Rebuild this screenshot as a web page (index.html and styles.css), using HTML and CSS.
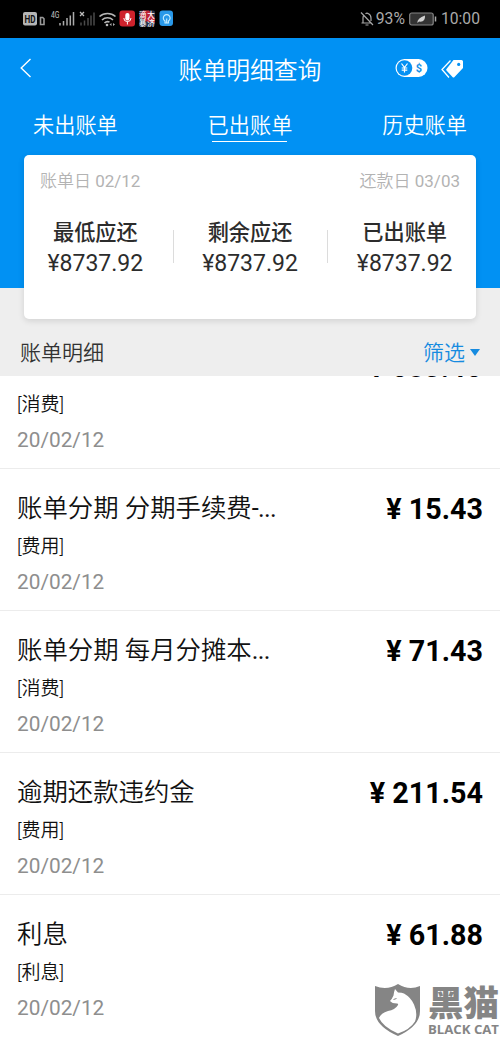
FILE: index.html
```html
<!DOCTYPE html>
<html lang="zh-CN">
<head>
<meta charset="utf-8">
<title>账单明细查询</title>
<link rel="stylesheet" href="styles.css">
</head>
<body>
<div class="status">
  <svg class="status-left" width="160" height="22" viewBox="0 0 160 22">
    <rect x="0" y="4" width="14" height="13.500" rx="2" fill="#b5b5b5"/>
    <text x="7" y="14.500" text-anchor="middle" textLength="11" lengthAdjust="spacingAndGlyphs" font-size="10" font-weight="700" fill="#111">HD</text>
    <path d="M17.500 9.500h2.200l1.300 1.300v5.700h-3.500z" fill="none" stroke="#999" stroke-width="1.600"/>
    <text x="28" y="9.500" font-size="8.500" textLength="8.500" lengthAdjust="spacingAndGlyphs" fill="#c0c0c0">4G</text>
    <path d="M37 17.500v-2.500M40.500 17.500v-4.500M44 17.500v-7.500M47.300 17.500v-10M50.500 17.500v-13.500" stroke="#aaa" stroke-width="1.500"/>
    <path d="M57 4l4 4m0-4l-4 4" stroke="#bbb" stroke-width="1.300"/>
    <path d="M58 17.500v-3M61.500 17.500v-5M65 17.500v-7.500M68 17.500v-10M71 17.500v-13" stroke="#4a4a4a" stroke-width="1.500"/>
    <path d="M76.500 8.500a12 12 0 0 1 16 0M79 12a8 8 0 0 1 11 0M81.500 15a4.500 4.500 0 0 1 5-1" fill="none" stroke="#b5b5b5" stroke-width="1.600"/>
    <circle cx="84" cy="17" r="1.300" fill="#bbb"/><path d="M86.500 16.500l2-1.500v3zM92 16.500l-2-1.500v3z" fill="#aaa"/>
    <rect x="96.500" y="2.500" width="15.500" height="16" rx="3" fill="#cf222c"/>
    <rect x="102.300" y="5" width="4.200" height="7.500" rx="2" fill="#fff"/>
    <path d="M100.800 10a3.600 3.600 0 0 0 7.200 0M104.400 13.500v3" fill="none" stroke="#fff"/>
    <rect x="116" y="2.500" width="16" height="16" rx="2" fill="#243048"/>
    <path d="M120 2.500h6l6 8v4l-9-1-7-6z" fill="#bd2337"/>
    <g fill="#fff" font-size="7.500" font-weight="500"><text x="116" y="9.500">滴</text><text x="124.300" y="9.500">大</text><text x="116" y="17.800">暴</text><text x="124.300" y="17.800">济</text></g>
    <rect x="136.500" y="2.500" width="13.500" height="15.500" rx="3" fill="#2998e8"/>
    <path d="M142 13a3.400 3.400 0 1 1 3.400 0v2H142zM143.700 15.500v-5" fill="none" stroke="#c9efff" stroke-width="1.100"/>
  </svg>
  <div class="status-right">
    <svg width="14" height="16" viewBox="0 0 14 16" fill="none" stroke="#a8a8a8" stroke-width="1.200"><path d="M1 1.500l12 12.500M1.500 12h9M3 12V7q0-2 1-3M5.500 2.700Q7 1.500 8.500 2.700 11 4 11 7v3M5.500 14h3"/></svg>
    <span class="pct">93%</span>
    <svg width="28" height="14" viewBox="0 0 28 14"><rect x=".7" y="1" width="23.500" height="12" rx="2" fill="#333" stroke="#858585" stroke-width="1.200"/><path d="M26.500 4.500v5" stroke="#aaa" stroke-width="1.500"/><path d="M8.500 11q-.5-5 7.500-7.500 .5 7-6 6z" fill="#d0d0d0"/></svg>
    <span class="time">10:00</span>
  </div>
</div>
<header class="hero">
  <div class="nav">
    <svg class="back" width="12" height="20" viewBox="0 0 12 20"><path d="M10.500 1L1.200 10l9.300 9" fill="none" stroke="#fff" stroke-width="1.400"/></svg>
    <h1 class="nav-title">账单明细查询</h1>
    <div class="nav-icons">
      <svg width="33" height="18" viewBox="0 0 33 18"><rect x=".5" y="0" width="32" height="18" rx="9" fill="#fff"/><circle cx="9.500" cy="9" r="7.800" fill="#0591f3"/><path d="M6.500 4.500l3 4 3-4M9.500 8.500v5M6.700 9h5.600M6.700 11.200h5.600" fill="none" stroke="#fff" stroke-width="1.200"/><text x="23.800" y="13" text-anchor="middle" font-size="11" font-weight="700" fill="#1590e8">$</text></svg>
      <svg width="23" height="20" viewBox="0 0 23 20"><path d="M12.500 1h8q1.500 0 1.500 1.500v6.500l-8.500 9q-1 1-2 0l-6-6.500q-.8-.8 0-1.600z" fill="#fff"/><circle cx="17.700" cy="5.400" r="1.600" fill="#0591f3"/><path d="M9.500 1.500L1 10.500l7 8" fill="none" stroke="#fff" stroke-width="1.300"/></svg>
    </div>
  </div>
  <nav class="tabs"><span class="tab">未出账单</span><span class="tab active">已出账单</span><span class="tab">历史账单</span></nav>
  <section class="card">
    <div class="days"><span>账单日 <span class="num">02/12</span></span><span>还款日 <span class="num">03/03</span></span></div>
    <div class="sums">
      <div class="sum"><b>最低应还</b><span>¥8737.92</span></div>
      <div class="sum"><b>剩余应还</b><span>¥8737.92</span></div>
      <div class="sum"><b>已出账单</b><span>¥8737.92</span></div>
    </div>
  </section>
</header>
<div class="bar"><span>账单明细</span><span class="filter">筛选<i class="caret"></i></span></div>
<main class="list">
  <article class="row first"><div class="info"><p class="tag">[消费]</p><p class="date">20/02/12</p></div><strong class="amount">¥ 683.46</strong></article>
  <article class="row"><div class="info"><h2>账单分期 分期手续费<span class="dots">-...</span></h2><p class="tag">[费用]</p><p class="date">20/02/12</p></div><strong class="amount">¥ 15.43</strong></article>
  <article class="row"><div class="info"><h2>账单分期 每月分摊本<span class="dots">...</span></h2><p class="tag">[消费]</p><p class="date">20/02/12</p></div><strong class="amount">¥ 71.43</strong></article>
  <article class="row"><div class="info"><h2>逾期还款违约金</h2><p class="tag">[费用]</p><p class="date">20/02/12</p></div><strong class="amount">¥ 211.54</strong></article>
  <article class="row"><div class="info"><h2>利息</h2><p class="tag">[利息]</p><p class="date">20/02/12</p></div><strong class="amount">¥ 61.88</strong></article>
</main>
<svg class="watermark" width="126" height="53" viewBox="0 0 126 53" fill="#858585">
  <path d="M0 2Q12 7 23 0q11 7 22 2v25q0 15-22 25Q0 42 0 27z"/>
  <path d="M20 5l3 3.500q4 0 6 1 7 4 10 11 4 9 1 17-5 8-17 12Q8 43 4 34q2-5 9-7 7-1 10-6 .5-1.500-1-1.500-5 0-7-2.500 2-2 3.500-5.500 .5-4 1.500-6.500z" fill="#fff"/>
  <path d="M18.500 15.500l3-1" stroke="#858585"/>
  <text class="brand-cn" x="53" y="32" textLength="71" lengthAdjust="spacingAndGlyphs">黑猫</text>
  <text class="brand-en" x="53" y="49.500" textLength="71" lengthAdjust="spacingAndGlyphs">BLACK CAT</text>
</svg>
</body>
</html>
```
FILE: styles.css
```css
* { box-sizing: border-box; margin: 0; padding: 0; }
body { width: 500px; height: 1037px; overflow: hidden; background: #fff; font-family: Roboto, "Noto Sans CJK SC", sans-serif; position: relative; color: #111; }
svg { display: block; flex: none; }
.num { font-weight: 400; }
.dots { font-weight: 400; letter-spacing: -0.7px; }
.status { height: 38px; background: #000; display: flex; justify-content: space-between; align-items: center; padding: 0 20px 0 23px; }
.status-right { display: flex; align-items: center; color: #aaa; font-size: 15.700px; line-height: 20px; }
.pct { margin: 0 4px 0 2px; }
.time { margin-left: 4px; }
.hero { height: 250px; background: #0191f3; }
.nav { height: 62px; display: grid; grid-template-columns: 100px 1fr 100px; align-items: center; }
.back { margin-left: 20px; margin-top: -2px; }
.nav-title { text-align: center; color: #fff; font-size: 23.800px; line-height: 36px; font-weight: 350; padding-top: 3px; }
.nav-icons { display: flex; gap: 13px; margin: -1px 0 0 -5px; }
.tabs { height: 55px; display: flex; justify-content: space-between; padding: 9px 33px 0; color: #fff; font-size: 21.200px; line-height: 32px; font-weight: 350; }
.tab { display: flex; flex-direction: column; align-items: center; padding-top: 1px; }
.active::after { content: ""; width: 75px; height: 1px; margin-top: -1px; background: #fff; }
.card { position: relative; z-index: 1; width: 452px; height: 164px; margin: 0 auto; background: #fff; border-radius: 5px; box-shadow: 0 2px 6px rgba(0,0,0,.12); }
.days { display: flex; justify-content: space-between; padding: 13px 16px 0; font-size: 17px; line-height: 26px; color: #b3b3b3; font-weight: 350; }
.sums { display: flex; margin: 25px -6px 0; }
.sum { flex: 1; display: flex; flex-direction: column; align-items: center; color: #2c2c2c; font-size: 23px; line-height: 34px; position: relative; }
.sum b { font-size: 21.200px; line-height: 28px; font-weight: 500; }
.sum + .sum::before { content: ""; position: absolute; left: 0; top: 11px; width: 1px; height: 33px; background: #dcdcdc; }
.bar { height: 88px; background: #eee; display: flex; justify-content: space-between; align-items: flex-end; padding: 0 20px 7px; font-size: 21px; line-height: 32px; font-weight: 350; color: #333; }
.filter { display: flex; align-items: center; color: #168be0; }
.caret { border: 5.500px solid transparent; border-top: 7px solid #168be0; border-bottom: 0; margin: -2px 0 0 5px; }
.list { height: 661px; overflow: hidden; }
.row { height: 142px; border-bottom: 1px solid #ececec; padding: 20px 17px 0; display: flex; justify-content: space-between; }
.row:last-child { border-bottom: 0; }
.first { height: 93px; padding-top: 0; }
.first .amount { margin-top: -29px; padding-right: 1px; }
.row h2 { font-size: 25.400px; line-height: 36px; font-weight: 350; padding-top: 1px; }
.tag { font-size: 19px; line-height: 28px; margin-top: 7px; font-weight: 350; }
.first .tag { margin-top: 15px; }
.date { font-size: 20.800px; line-height: 28px; margin-top: 7px; color: #8e8e8e; }
.amount { font-size: 28.700px; line-height: 41px; font-weight: 700; color: #000; }
.watermark { position: absolute; left: 375px; top: 984px; }
.brand-cn { font-size: 35px; font-weight: 900; }
.brand-en { font-size: 12px; font-weight: 700; font-family: "Open Sans", sans-serif; }
```
